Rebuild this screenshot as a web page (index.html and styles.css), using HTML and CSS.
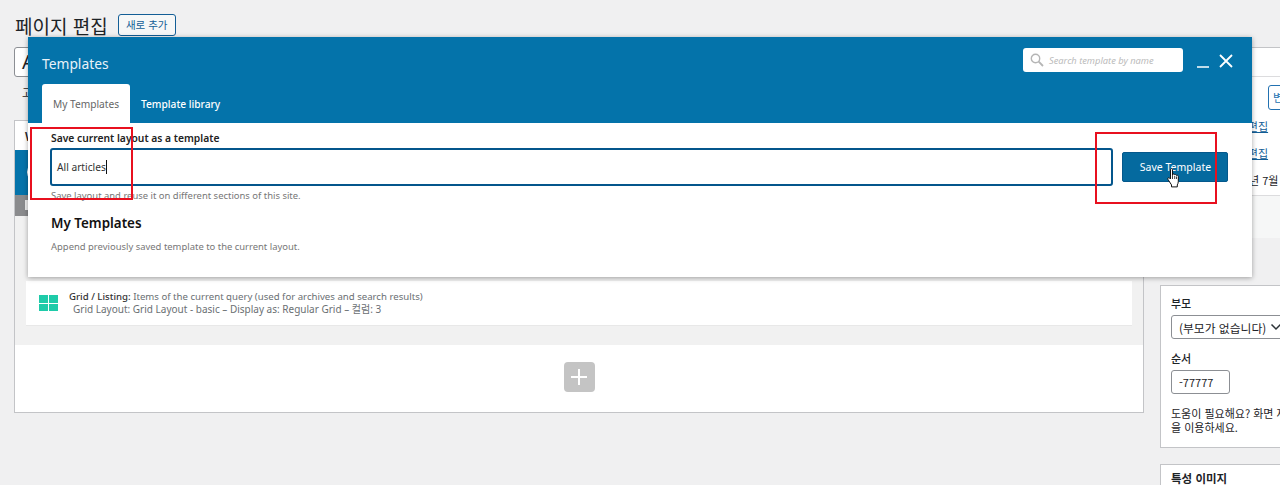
FILE: index.html
```html
<!DOCTYPE html>
<html lang="ko">
<head>
  <meta charset="UTF-8" />
  <title>페이지 편집</title>
  <link rel="stylesheet" href="styles.css">
</head>
<body>

  <div class="page-head">
    <h1>페이지 편집</h1>
    <a class="add-new">새로 추가</a>
  </div>

  <div class="columns">
    <div class="main-col">
      <div class="title-input">All articles</div>
      <div class="permalink">고유주소:</div>

      <div class="builder">
        <div class="builder-title">WPBakery Page Builder</div>
        <div class="builder-bar"><span class="builder-logo"></span></div>
        <div class="builder-sub"><span class="builder-sub-icon"></span></div>
        <div class="builder-body">
          <div class="element">
            <div class="grid-icon"><i></i><i></i><i></i><i></i></div>
            <div class="element-text">
              <div><strong>Grid / Listing:</strong> Items of the current query (used for archives and search results)</div>
              <div class="element-meta">Grid Layout: Grid Layout - basic – Display as: Regular Grid – 컬럼: 3</div>
            </div>
          </div>
        </div>
        <div class="builder-foot">
          <div class="add-element">
            <svg width="16" height="16" viewBox="0 0 16 16"><path d="M8 0v16M0 8h16" stroke="#fff" stroke-width="2" fill="none"/></svg>
          </div>
        </div>
      </div>
    </div>

    <div class="side-col">
      <div class="side-box publish">
        <div class="side-head"></div>
        <div class="publish-actions"><span class="preview-btn">변경 미리보기</span></div>
        <div class="misc"><span>상태: 공개됨</span> <a>편집</a></div>
        <div class="misc"><span>가시성: 공개</span> <a>편집</a></div>
        <div class="misc"><span>발행일: 2020년 7월 12일</span></div>
        <div class="publish-foot"></div>
      </div>

      <div class="side-box attrs">
        <label>부모</label>
        <div class="fake-select">(부모가 없습니다)
          <svg width="12" height="8" viewBox="0 0 12 8"><path d="M1.500 1.500 6 6l4.500-4.500" stroke="#2c3338" stroke-width="1.500" fill="none"/></svg>
        </div>
        <label>순서</label>
        <div class="fake-number">-77777</div>
        <p class="help">도움이 필요해요? 화면 제목 위의 도움말 탭<br>을 이용하세요.</p>
      </div>

      <div class="side-box thumb">
        <h2>특성 이미지</h2>
      </div>
    </div>
  </div>

  <!-- templates popup -->
  <div class="modal">
    <div class="modal-head">
      <div class="modal-top">
        <span class="modal-title">Templates</span>
        <div class="modal-tools">
          <div class="search">
            <svg width="14" height="14" viewBox="0 0 14 14"><circle cx="5.500" cy="5.500" r="4.200" stroke="#b5b5b5" stroke-width="1.400" fill="none"/><path d="M8.700 8.700 13 13" stroke="#b5b5b5" stroke-width="1.800"/></svg>
            <span>Search template by name</span>
          </div>
          <svg class="minimize" width="12" height="13" viewBox="0 0 12 13"><path d="M0 12h12" stroke="#fff" stroke-width="1.500"/></svg>
          <svg class="close" width="14" height="14" viewBox="0 0 14 14"><path d="M1 1l12 12M13 1 1 13" stroke="#fff" stroke-width="1.800"/></svg>
        </div>
      </div>
      <div class="tabs">
        <div class="tab active">My Templates</div>
        <div class="tab">Template library</div>
      </div>
    </div>
    <div class="modal-body">
      <div class="field-label">Save current layout as a template</div>
      <div class="save-row">
        <div class="name-input">All articles<span class="caret"></span></div>
        <button class="save-btn">Save Template</button>
      </div>
      <div class="hint">Save layout and reuse it on different sections of this site.</div>
      <h3>My Templates</h3>
      <div class="hint">Append previously saved template to the current layout.</div>
    </div>
  </div>

  <!-- annotations drawn on the screenshot -->
  <div class="mark mark-left"></div>
  <div class="mark mark-right"></div>

  <svg class="hand" width="13" height="20" viewBox="0 0 13 20">
    <path d="M3.500 1.500c0-1.200 2-1.200 2 0v6l.3-1.200c.8-.6 1.700-.3 1.900.5.700-.5 1.600-.2 1.800.6.800-.4 1.800 0 1.800 1v5c0 1.500-.5 2.500-1 3.500v2H4.500v-2L1 11.500c-.8-1.200.5-2.300 1.500-1.500l1 1z" fill="#fff" stroke="#111" stroke-width="1"/>
    <path d="M5.500 8v3M7.700 8v3M9.500 8.500V11" stroke="#111" stroke-width=".8"/>
  </svg>

</body>
</html>
```

FILE: styles.css
```css
* {
  box-sizing: border-box;
}
html, body {
  height: 485px;
  overflow: hidden;
}
body {
  margin: 0;
  position: relative;
  background: #f0f0f1;
  color: #1d2327;
  font-family: "Noto Sans", "Noto Sans CJK KR", sans-serif;
  font-size: 11px;
}

/* page background */
.page-head {
  display: flex;
  align-items: center;
  gap: 10px;
  height: 47px;
  padding: 3px 0 0 15px;
}
h1 {
  margin: 0;
  font-size: 19px;
  font-weight: 400;
  font-family: "Noto Sans CJK KR", sans-serif;
}
.add-new {
  width: 58px;
  height: 22px;
  text-align: center;
  line-height: 20px;
  border: 1px solid #135e96;
  border-radius: 3px;
  color: #135e96;
  background: #f6f7f7;
  font-size: 10.500px;
  font-family: "Noto Sans CJK KR", sans-serif;
}
.columns {
  display: flex;
  gap: 16px;
  padding-left: 14px;
  width: 1440px;
}
.main-col {
  width: 1130px;
  flex: none;
}
.title-input {
  height: 30px;
  padding: 0 7px;
  border: 1px solid #8c8f94;
  border-radius: 3px;
  background: #fff;
  font-size: 20px;
  line-height: 28px;
}
.permalink {
  height: 43px;
  padding: 7px 8px 0;
  font-family: "Noto Sans CJK KR", sans-serif;
  font-size: 11px;
}
.builder {
  height: 293px;
  border: 1px solid #c3c4c7;
  background: #fff;
}
.builder-title {
  height: 29px;
  padding: 7px 10px;
  font-size: 12px;
  font-weight: 600;
}
.builder-bar {
  height: 45px;
  padding: 12px;
  background: #0473aa;
}
.builder-logo {
  display: block;
  width: 20px;
  height: 20px;
  border-radius: 50%;
  background: #fff;
}
.builder-sub {
  height: 21px;
  padding: 5px 10px;
  background: #8a8b8d;
}
.builder-sub-icon {
  display: block;
  width: 10px;
  height: 10px;
  background: #eee;
}
.builder-body {
  height: 129px;
  padding: 65px 11px 0;
  background: #f1f1f1;
}
.element {
  display: flex;
  gap: 11px;
  height: 45px;
  padding: 9px 13px 0;
  background: #fff;
  border-bottom: 1px solid #e8e8e8;
  color: #6a6f73;
  font-size: 9.650px;
  line-height: 13px;
}
.element strong {
  color: #333;
  font-weight: 500;
}
.element-meta {
  padding-left: 4px;
  font-size: 10px;
}
.grid-icon {
  display: grid;
  grid-template-columns: 9px 9px;
  grid-auto-rows: 7.500px;
  gap: 1px;
  width: 19px;
  margin-top: 5px;
}
.grid-icon i {
  background: #1ecba9;
}
.builder-foot {
  display: flex;
  justify-content: center;
  padding-top: 17px;
}
.add-element {
  display: flex;
  align-items: center;
  justify-content: center;
  width: 31px;
  height: 30px;
  border-radius: 4px;
  background: #c4c4c4;
}

/* right column */
.side-col {
  width: 280px;
  flex: none;
}
.side-box {
  border: 1px solid #c3c4c7;
  background: #fff;
}
.publish {
  height: 187px;
  margin-bottom: 51px;
}
.side-head {
  height: 29px;
  border-bottom: 1px solid #dcdcde;
}
.publish-actions {
  height: 36px;
  padding: 8px 0 0 107px;
}
.preview-btn {
  display: block;
  width: 120px;
  height: 25px;
  padding-left: 4px;
  line-height: 23px;
  border: 1px solid #2271b1;
  border-radius: 3px;
  color: #2271b1;
  font-family: "Noto Sans CJK KR", sans-serif;
  white-space: nowrap;
  overflow: hidden;
}
.misc {
  height: 27px;
  line-height: 27px;
  padding-left: 27px;
  font-family: "Noto Sans CJK KR", sans-serif;
  white-space: nowrap;
}
.misc a {
  color: #135e96;
  text-decoration: underline;
}
.publish-foot {
  height: 43px;
  margin-top: 1px;
  border-top: 1px solid #dcdcde;
  background: #f6f7f7;
}
.attrs {
  height: 163px;
  padding: 9px 10px 0;
  margin-bottom: 16px;
  font-family: "Noto Sans CJK KR", sans-serif;
}
.attrs label {
  display: block;
  font-weight: 500;
  line-height: 16px;
  margin-bottom: 4px;
}
.fake-select {
  display: flex;
  align-items: center;
  justify-content: space-between;
  width: 116px;
  height: 24px;
  padding: 0 4px 0 7px;
  border: 1px solid #8c8f94;
  border-radius: 3px;
  font-size: 11.800px;
  white-space: nowrap;
  margin-bottom: 11px;
}
.fake-number {
  width: 59px;
  height: 24px;
  padding: 0 7px;
  line-height: 22px;
  border: 1px solid #8c8f94;
  border-radius: 3px;
}
.help {
  margin: 12px 0 0;
  line-height: 14px;
  white-space: nowrap;
}
.thumb {
  height: 60px;
  padding: 5px 10px;
}
.thumb h2 {
  margin: 0;
  font-size: 11.500px;
  font-weight: 600;
  font-family: "Noto Sans CJK KR", sans-serif;
}

/* popup */
.modal {
  position: absolute;
  left: 28px;
  top: 37px;
  width: 1224px;
  height: 240px;
  background: #fff;
  box-shadow: 0 1px 5px rgba(0, 0, 0, 0.35);
}
.modal-head {
  height: 86px;
  padding: 0 14px;
  background: #0473aa;
}
.modal-top {
  display: flex;
  justify-content: space-between;
  height: 47px;
}
.modal-title {
  padding-top: 17px;
  color: #e8f2f8;
  font-size: 13.800px;
}
.modal-tools {
  display: flex;
  align-items: flex-start;
  padding: 11px 5px 0 0;
}
.search {
  display: flex;
  align-items: center;
  gap: 5px;
  width: 160px;
  height: 24px;
  padding-left: 7px;
  background: #fff;
  border-radius: 3px;
  color: #bbb;
  font-size: 9.300px;
  font-style: italic;
}
.minimize {
  margin: 7px 0 0 14px;
}
.close {
  margin: 6px 0 0 10px;
}
.tabs {
  display: flex;
}
.tab {
  height: 39px;
  padding: 0 11px;
  line-height: 40px;
  color: #fff;
  font-weight: 500;
  font-size: 10.200px;
}
.tab.active {
  width: 88px;
  padding: 0;
  text-align: center;
  background: #fff;
  border-radius: 3px 3px 0 0;
  color: #666;
  font-weight: 400;
}
.modal-body {
  padding: 7px 24px 0 22px;
}
.field-label {
  padding-left: 1px;
  color: #222;
  font-weight: 600;
  font-size: 10.300px;
  line-height: 16px;
}
.save-row {
  display: flex;
  align-items: center;
  gap: 9px;
  margin-top: 2px;
}
.name-input {
  flex: 1;
  height: 38px;
  padding-left: 5px;
  font-size: 10.200px;
  line-height: 34px;
  border: 2px solid #04568c;
  border-radius: 3px;
  color: #333;
}
.caret {
  display: inline-block;
  width: 1px;
  height: 14px;
  vertical-align: -3px;
  background: #111;
}
.save-btn {
  width: 106px;
  height: 30px;
  padding: 0 0 0 1px;
  border: 1px solid #04588c;
  border-radius: 2px;
  background: #056a9f;
  color: #fff;
  font-family: inherit;
  font-size: 10.500px;
}
.hint {
  margin-top: 2px;
  padding-left: 1px;
  color: #777;
  font-size: 9.450px;
  line-height: 15px;
}
.modal-body h3 {
  margin: 11px 0 6px 1px;
  color: #111;
  font-size: 13.400px;
  font-weight: 600;
  line-height: 19px;
}

/* red boxes and mouse pointer */
.mark {
  position: absolute;
  border: 2px solid #e8101f;
}
.mark-left {
  left: 30px;
  top: 127px;
  width: 103px;
  height: 73px;
}
.mark-right {
  left: 1095px;
  top: 132px;
  width: 122px;
  height: 72px;
}
.hand {
  position: absolute;
  left: 1167px;
  top: 168px;
}
```
